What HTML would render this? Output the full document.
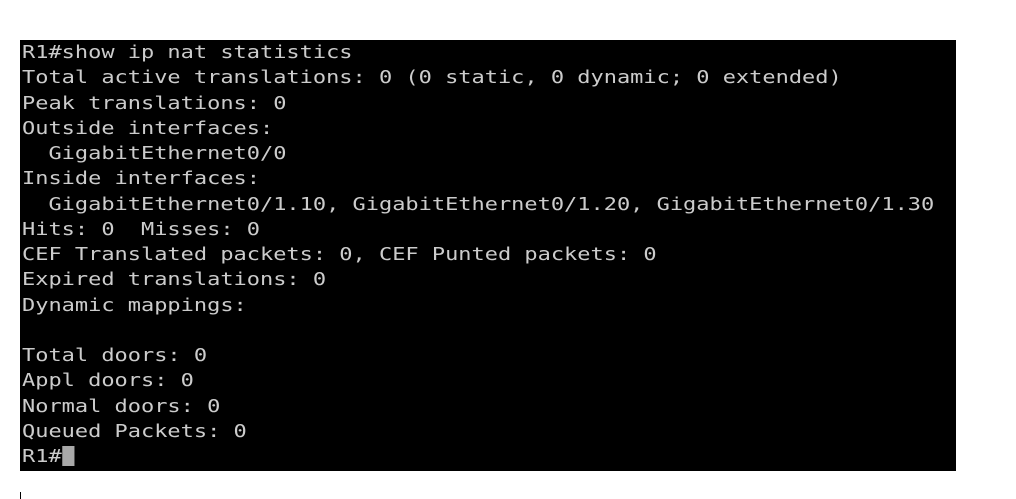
<!DOCTYPE html>
<html><head><meta charset="utf-8"><style>
html,body{margin:0;padding:0;background:#fff;width:1016px;height:499px;overflow:hidden;position:relative}
.term{position:absolute;left:20px;top:40px;width:936px;height:431px;background:#000}
pre{position:absolute;left:22px;top:40px;margin:0;font-family:"DejaVu Sans Mono","Liberation Mono",monospace;font-size:18px;line-height:25.25px;color:#cccccc;transform:scaleX(1.22);transform-origin:0 0}
.cur{display:inline-block;width:10.8px;height:20px;background:#a8a8a8;vertical-align:-4px}
.bar{position:absolute;left:20px;top:492px;width:1px;height:7px;background:#000}
</style></head><body>
<div class="term"></div>
<pre>R1#show ip nat statistics
Total active translations: 0 (0 static, 0 dynamic; 0 extended)
Peak translations: 0
Outside interfaces:
  GigabitEthernet0/0
Inside interfaces:
  GigabitEthernet0/1.10, GigabitEthernet0/1.20, GigabitEthernet0/1.30
Hits: 0  Misses: 0
CEF Translated packets: 0, CEF Punted packets: 0
Expired translations: 0
Dynamic mappings:

Total doors: 0
Appl doors: 0
Normal doors: 0
Queued Packets: 0
R1#<span class="cur"></span></pre>
<div class="bar"></div>
</body></html>
